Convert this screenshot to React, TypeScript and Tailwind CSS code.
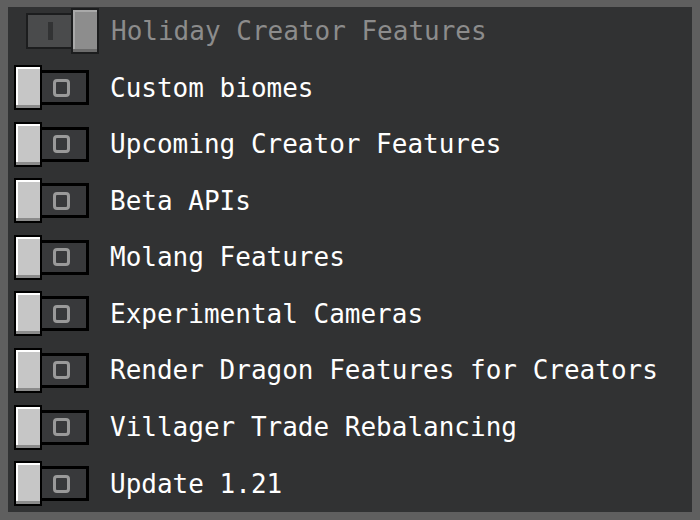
const experiments = [
  "Custom biomes",
  "Upcoming Creator Features",
  "Beta APIs",
  "Molang Features",
  "Experimental Cameras",
  "Render Dragon Features for Creators",
  "Villager Trade Rebalancing",
  "Update 1.21",
];

function OffToggle() {
  return (
    <div className="flex items-center">
      <div className="relative z-10 w-[28px] h-[45px] border-2 border-black bg-[#8b8b8b] flex flex-col">
        <div className="flex-1 border-t-2 border-l-2 border-white bg-[#c6c6c6]" />
        <div className="h-[3px] bg-[#8b8b8b]" />
      </div>
      <div className="-ml-[1px] w-[48px] h-[35px] border-[3px] border-l-0 border-black bg-[#38393b] flex items-center justify-center">
        <div className="-ml-[4px] w-[17px] h-[18px] border-[3px] border-[#9a9a9a] rounded-[4px]" />
      </div>
    </div>
  );
}

function DisabledOnToggle() {
  return (
    <div className="flex items-center">
      <div className="w-[48px] h-[36px] border-2 border-[#1c1d1e] bg-[#4a4b4c] flex items-center justify-center">
        <div className="w-[5px] h-[18px] bg-[#323334]" />
      </div>
      <div className="-ml-[3px] w-[28px] h-[46px] border-2 border-[#1c1d1e] bg-[#5f6061] flex flex-col">
        <div className="flex-1 border-t-2 border-l-2 border-[#a9a9a9] bg-[#8d8d8d]" />
        <div className="h-[3px] bg-[#6b6b6b]" />
      </div>
    </div>
  );
}

export default function App() {
  return (
    <div
      className="w-[700px] h-[520px] bg-[#5f5f5f] pt-[7px] pb-[8px] px-[8px]"
      style={{ fontFamily: '"DejaVu Sans Mono", "Liberation Mono", monospace' }}
    >
      <div className="h-full bg-[#313233] pt-[1px] px-[6px] flex flex-col">
        <div className="flex items-center h-[46px]">
          <div className="ml-[12px]">
            <DisabledOnToggle />
          </div>
          <span className="ml-[12px] text-[26px] leading-none text-[#8c8c8c]">
            Holiday Creator Features
          </span>
        </div>
        <div className="mt-[11px] flex flex-col gap-[11.6px]">
          {experiments.map((name) => (
            <div key={name} className="flex items-center h-[45px]">
              <OffToggle />
              <span className="ml-[21px] text-[26px] leading-none text-white">
                {name}
              </span>
            </div>
          ))}
        </div>
      </div>
    </div>
  );
}
